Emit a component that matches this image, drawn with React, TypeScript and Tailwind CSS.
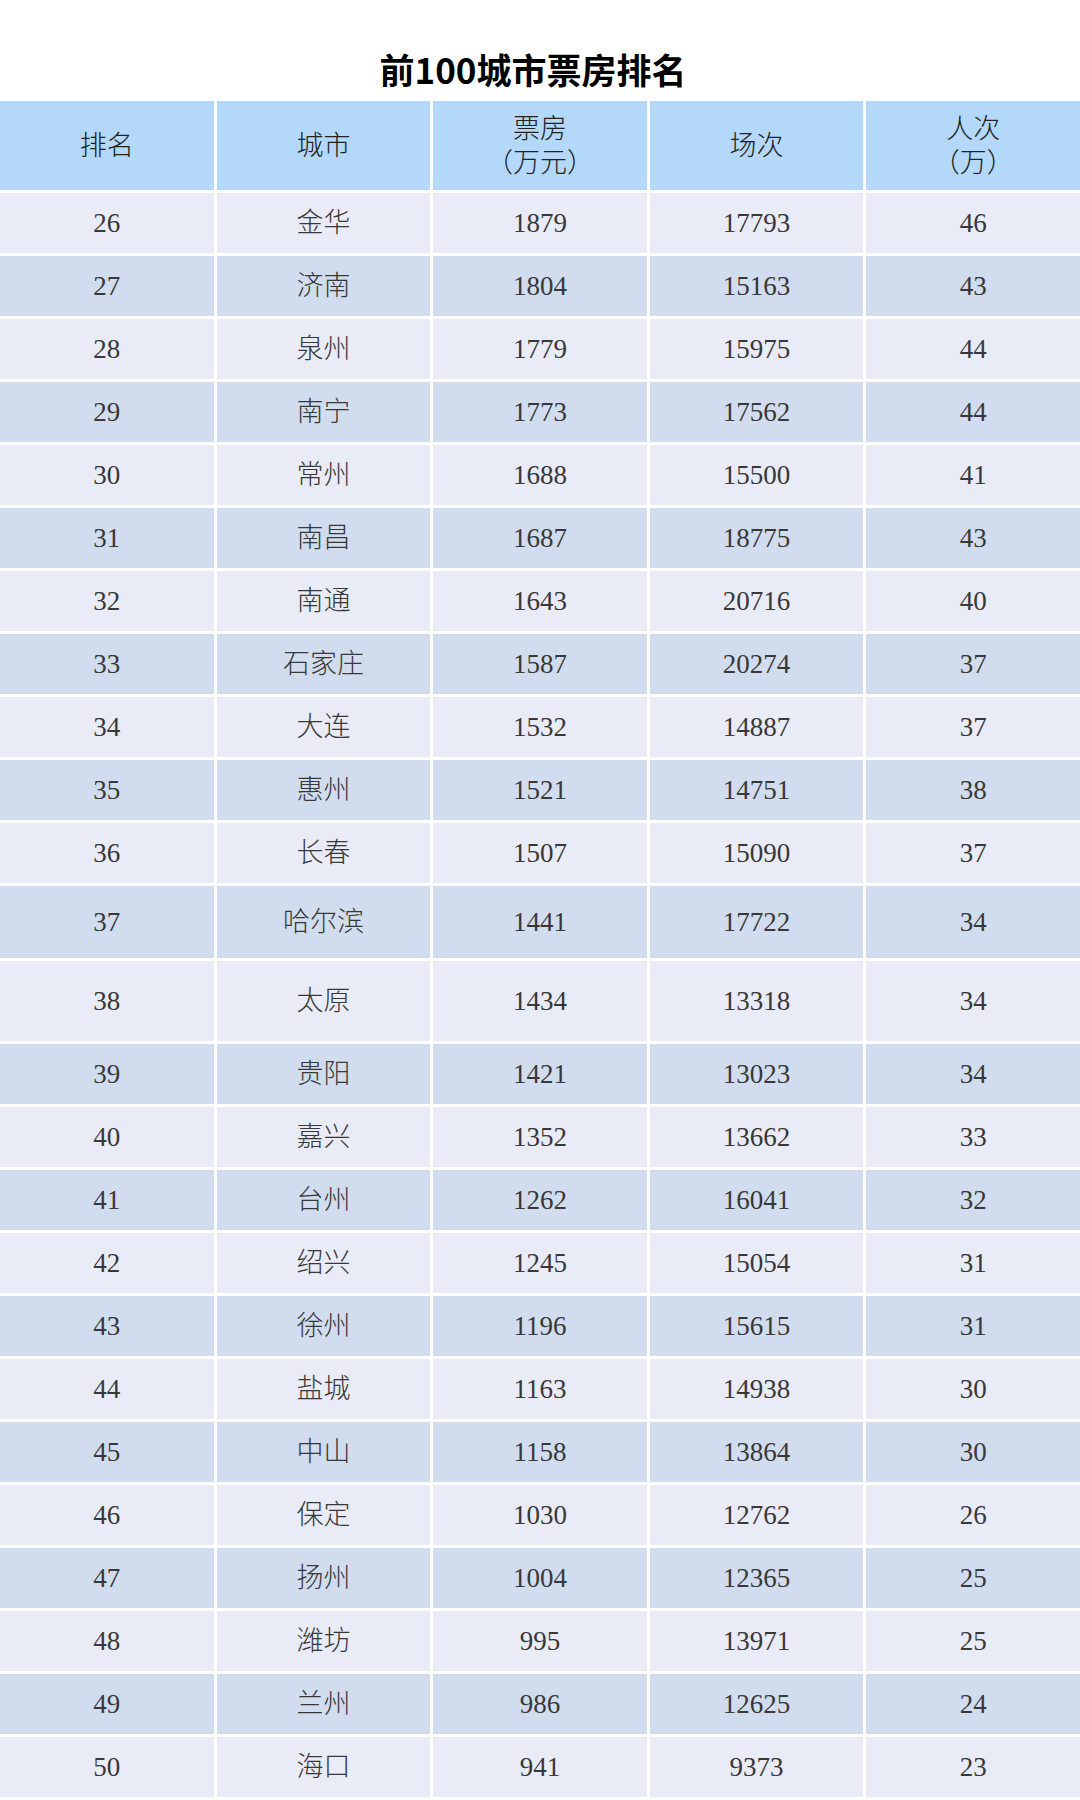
const rows: [string, string, string, string, string][] = [
  ["26", "金华", "1879", "17793", "46"],
  ["27", "济南", "1804", "15163", "43"],
  ["28", "泉州", "1779", "15975", "44"],
  ["29", "南宁", "1773", "17562", "44"],
  ["30", "常州", "1688", "15500", "41"],
  ["31", "南昌", "1687", "18775", "43"],
  ["32", "南通", "1643", "20716", "40"],
  ["33", "石家庄", "1587", "20274", "37"],
  ["34", "大连", "1532", "14887", "37"],
  ["35", "惠州", "1521", "14751", "38"],
  ["36", "长春", "1507", "15090", "37"],
  ["37", "哈尔滨", "1441", "17722", "34"],
  ["38", "太原", "1434", "13318", "34"],
  ["39", "贵阳", "1421", "13023", "34"],
  ["40", "嘉兴", "1352", "13662", "33"],
  ["41", "台州", "1262", "16041", "32"],
  ["42", "绍兴", "1245", "15054", "31"],
  ["43", "徐州", "1196", "15615", "31"],
  ["44", "盐城", "1163", "14938", "30"],
  ["45", "中山", "1158", "13864", "30"],
  ["46", "保定", "1030", "12762", "26"],
  ["47", "扬州", "1004", "12365", "25"],
  ["48", "潍坊", "995", "13971", "25"],
  ["49", "兰州", "986", "12625", "24"],
  ["50", "海口", "941", "9373", "23"],
];

const headers = [["排名"], ["城市"], ["票房", "（万元）"], ["场次"], ["人次", "（万）"]];

// a couple of rows in the source image are taller than the rest
const rowHeight = (rank: string) => {
  if (rank === "37") return "h-[72px]";
  if (rank === "38") return "h-[80px]";
  return "h-[60px]";
};

const App = () => {
  return (
    <div className="w-[1080px] min-h-[1800px] bg-white font-['Liberation_Serif','Noto_Sans_CJK_SC',serif]">
      <div className="h-[101px] flex items-end justify-center pb-[14px] pr-[14px]">
        <h1 className="text-[35px] leading-[36px] font-bold text-black font-['Noto_Sans_CJK_SC',sans-serif]">
          前100城市票房排名
        </h1>
      </div>

      <div className="grid grid-cols-5 gap-[3px]">
        {headers.map((h, i) => (
          <div
            key={i}
            className="h-[89px] bg-[#b3d8fa] flex flex-col items-center justify-center text-[27px] leading-[34px] text-[#222] font-light"
          >
            {h.map((line, j) => (
              <span key={j}>{line}</span>
            ))}
          </div>
        ))}

        {rows.map((r, i) =>
          r.map((cell, j) => (
            <div
              key={`${i}-${j}`}
              className={`${rowHeight(r[0])} ${
                i % 2 === 0 ? "bg-[#e9ebf7]" : "bg-[#d1ddee]"
              } flex items-center justify-center text-[27px] text-[#383838] font-light`}
            >
              {cell}
            </div>
          ))
        )}
      </div>
    </div>
  );
};

export default App;
